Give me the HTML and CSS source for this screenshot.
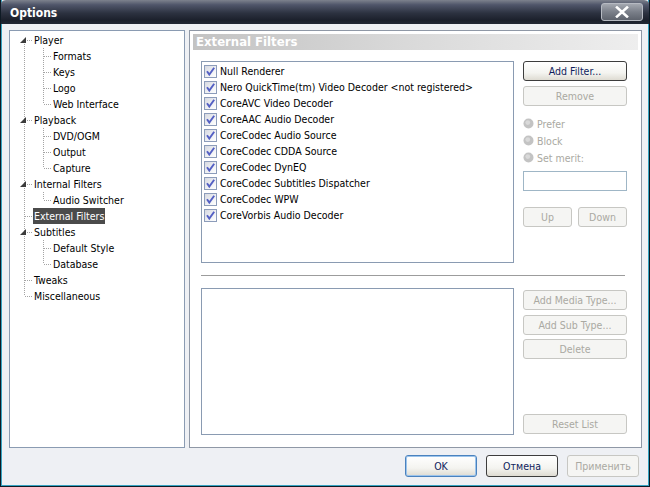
FILE: index.html
```html
<!DOCTYPE html>
<html>
<head>
<meta charset="utf-8">
<title>Options</title>
<link rel="stylesheet" href="styles.css">
</head>
<body>
<div class="window">
  <div class="titlebar">
    <span class="title">Options</span>
    <div class="close"><svg width="16" height="12" viewBox="0 0 16 12"><path d="M3 1.5L13 10.5M13 1.5L3 10.5" stroke="#fff" stroke-width="2.6" stroke-linecap="square"/></svg></div>
  </div>
  <div class="main">
    <div class="tree">
      <div class="trow"><svg class="g" width="23" height="16"><path class="dl" d="M14.5 8v8M17 8.5h6"/><path d="M16 5L16 11L10 11Z" fill="#3c3c3c"/></svg><span class="lbl">Player</span></div>
      <div class="trow"><svg class="g" width="42" height="16"><path class="dl" d="M14.5 0v16M33.5 0v16M34 8.5h8"/></svg><span class="lbl">Formats</span></div>
      <div class="trow"><svg class="g" width="42" height="16"><path class="dl" d="M14.5 0v16M33.5 0v16M34 8.5h8"/></svg><span class="lbl">Keys</span></div>
      <div class="trow"><svg class="g" width="42" height="16"><path class="dl" d="M14.5 0v16M33.5 0v16M34 8.5h8"/></svg><span class="lbl">Logo</span></div>
      <div class="trow"><svg class="g" width="42" height="16"><path class="dl" d="M14.5 0v16M33.5 0v8M34 8.5h8"/></svg><span class="lbl">Web Interface</span></div>
      <div class="trow"><svg class="g" width="23" height="16"><path class="dl" d="M14.5 0v16M17 8.5h6"/><path d="M16 5L16 11L10 11Z" fill="#3c3c3c"/></svg><span class="lbl">Playback</span></div>
      <div class="trow"><svg class="g" width="42" height="16"><path class="dl" d="M14.5 0v16M33.5 0v16M34 8.5h8"/></svg><span class="lbl">DVD/OGM</span></div>
      <div class="trow"><svg class="g" width="42" height="16"><path class="dl" d="M14.5 0v16M33.5 0v16M34 8.5h8"/></svg><span class="lbl">Output</span></div>
      <div class="trow"><svg class="g" width="42" height="16"><path class="dl" d="M14.5 0v16M33.5 0v8M34 8.5h8"/></svg><span class="lbl">Capture</span></div>
      <div class="trow"><svg class="g" width="23" height="16"><path class="dl" d="M14.5 0v16M17 8.5h6"/><path d="M16 5L16 11L10 11Z" fill="#3c3c3c"/></svg><span class="lbl">Internal Filters</span></div>
      <div class="trow"><svg class="g" width="42" height="16"><path class="dl" d="M14.5 0v16M33.5 0v8M34 8.5h8"/></svg><span class="lbl">Audio Switcher</span></div>
      <div class="trow"><svg class="g" width="23" height="16"><path class="dl" d="M14.5 0v16M15 8.5h8"/></svg><span class="lbl sel">External Filters</span></div>
      <div class="trow"><svg class="g" width="23" height="16"><path class="dl" d="M14.5 0v16M17 8.5h6"/><path d="M16 5L16 11L10 11Z" fill="#3c3c3c"/></svg><span class="lbl">Subtitles</span></div>
      <div class="trow"><svg class="g" width="42" height="16"><path class="dl" d="M14.5 0v16M33.5 0v16M34 8.5h8"/></svg><span class="lbl">Default Style</span></div>
      <div class="trow"><svg class="g" width="42" height="16"><path class="dl" d="M14.5 0v16M33.5 0v8M34 8.5h8"/></svg><span class="lbl">Database</span></div>
      <div class="trow"><svg class="g" width="23" height="16"><path class="dl" d="M14.5 0v16M15 8.5h8"/></svg><span class="lbl">Tweaks</span></div>
      <div class="trow"><svg class="g" width="23" height="16"><path class="dl" d="M14.5 0v8M15 8.5h8"/></svg><span class="lbl">Miscellaneous</span></div>
    </div>
    <div class="panel">
      <div class="panel-header">External Filters</div>
      <div class="panel-body">
        <div class="row1">
          <div class="listbox list1">
            <div class="item"><span class="cb"><svg width="11" height="11" viewBox="0 0 11 11"><path d="M2 5.2L4.3 8.6L9.2 1.8" stroke="#5460c4" stroke-width="1.9" fill="none"/></svg></span>Null Renderer</div>
            <div class="item"><span class="cb"><svg width="11" height="11" viewBox="0 0 11 11"><path d="M2 5.2L4.3 8.6L9.2 1.8" stroke="#5460c4" stroke-width="1.9" fill="none"/></svg></span>Nero QuickTime(tm) Video Decoder &lt;not registered&gt;</div>
            <div class="item"><span class="cb"><svg width="11" height="11" viewBox="0 0 11 11"><path d="M2 5.2L4.3 8.6L9.2 1.8" stroke="#5460c4" stroke-width="1.9" fill="none"/></svg></span>CoreAVC Video Decoder</div>
            <div class="item"><span class="cb"><svg width="11" height="11" viewBox="0 0 11 11"><path d="M2 5.2L4.3 8.6L9.2 1.8" stroke="#5460c4" stroke-width="1.9" fill="none"/></svg></span>CoreAAC Audio Decoder</div>
            <div class="item"><span class="cb"><svg width="11" height="11" viewBox="0 0 11 11"><path d="M2 5.2L4.3 8.6L9.2 1.8" stroke="#5460c4" stroke-width="1.9" fill="none"/></svg></span>CoreCodec Audio Source</div>
            <div class="item"><span class="cb"><svg width="11" height="11" viewBox="0 0 11 11"><path d="M2 5.2L4.3 8.6L9.2 1.8" stroke="#5460c4" stroke-width="1.9" fill="none"/></svg></span>CoreCodec CDDA Source</div>
            <div class="item"><span class="cb"><svg width="11" height="11" viewBox="0 0 11 11"><path d="M2 5.2L4.3 8.6L9.2 1.8" stroke="#5460c4" stroke-width="1.9" fill="none"/></svg></span>CoreCodec DynEQ</div>
            <div class="item"><span class="cb"><svg width="11" height="11" viewBox="0 0 11 11"><path d="M2 5.2L4.3 8.6L9.2 1.8" stroke="#5460c4" stroke-width="1.9" fill="none"/></svg></span>CoreCodec Subtitles Dispatcher</div>
            <div class="item"><span class="cb"><svg width="11" height="11" viewBox="0 0 11 11"><path d="M2 5.2L4.3 8.6L9.2 1.8" stroke="#5460c4" stroke-width="1.9" fill="none"/></svg></span>CoreCodec WPW</div>
            <div class="item"><span class="cb"><svg width="11" height="11" viewBox="0 0 11 11"><path d="M2 5.2L4.3 8.6L9.2 1.8" stroke="#5460c4" stroke-width="1.9" fill="none"/></svg></span>CoreVorbis Audio Decoder</div>
          </div>
          <div class="col1">
            <div class="btn">Add Filter...</div>
            <div class="btn dis gap5">Remove</div>
            <div class="radios">
              <div class="radio"><svg width="11" height="11" viewBox="0 0 11 11"><circle cx="5.5" cy="5.5" r="5" fill="#c3c3c3"/><circle cx="4.8" cy="4.6" r="2.4" fill="#d9d9d9"/></svg>Prefer</div>
              <div class="radio"><svg width="11" height="11" viewBox="0 0 11 11"><circle cx="5.5" cy="5.5" r="5" fill="#c3c3c3"/><circle cx="4.8" cy="4.6" r="2.4" fill="#d9d9d9"/></svg>Block</div>
              <div class="radio"><svg width="11" height="11" viewBox="0 0 11 11"><circle cx="5.5" cy="5.5" r="5" fill="#c3c3c3"/><circle cx="4.8" cy="4.6" r="2.4" fill="#d9d9d9"/></svg>Set merit:</div>
            </div>
            <div class="input"></div>
            <div class="updown">
              <div class="btn dis small">Up</div>
              <div class="btn dis small">Down</div>
            </div>
          </div>
        </div>
        <div class="sep"></div>
        <div class="row2">
          <div class="listbox list2"></div>
          <div class="col2">
            <div class="btn dis">Add Media Type...</div>
            <div class="btn dis gap5">Add Sub Type...</div>
            <div class="btn dis gap4">Delete</div>
            <div class="btn dis push">Reset List</div>
          </div>
        </div>
      </div>
    </div>
  </div>
  <div class="footer">
    <div class="btn fbtn def">OK</div>
    <div class="btn fbtn">Отмена</div>
    <div class="btn fbtn dis">Применить</div>
  </div>
</div>
</body>
</html>
```
FILE: styles.css
```css
html, body {
  margin: 0;
  padding: 0;
  background: #eef0f4;
}
body {
  font-family: "DejaVu Sans Condensed", "DejaVu Sans", sans-serif;
  font-size: 10.5px;
  color: #000;
}
.window {
  width: 650px;
  height: 487px;
  box-sizing: border-box;
  border: 1px solid #0e1a24;
  border-top: none;
  background: #eef0f4;
  box-shadow: inset 1px 0 0 #36a4c2, inset -1px 0 0 #36a4c2, inset 0 -1px 0 #36a4c2;
  overflow: hidden;
}
.titlebar {
  height: 24px;
  margin: 0 -1px;
  display: flex;
  align-items: center;
  justify-content: space-between;
  background: linear-gradient(#7d828d 0%, #50566a 20%, #2c3240 55%, #1b202b 85%, #222834 100%);
  border-radius: 6px 6px 0 0;
}
.title {
  color: #fff;
  font-weight: bold;
  font-size: 12px;
  padding-left: 10px;
  padding-top: 1px;
}
.close {
  width: 42px;
  height: 18px;
  box-sizing: border-box;
  margin-right: 7px;
  margin-top: 0px;
  border: 1px solid #b6bac2;
  border-radius: 3px;
  background: linear-gradient(#a4a8b0, #7a7f89 50%, #5e636d);
  display: flex;
  align-items: center;
  justify-content: center;
}
.main {
  display: flex;
  gap: 4px;
  padding: 6px 0 0 8px;
}
.tree {
  width: 176px;
  height: 418px;
  box-sizing: border-box;
  border: 1px solid #8a9bb2;
  background: #fff;
  padding-top: 1px;
}
.trow {
  height: 16px;
  display: flex;
  align-items: center;
  white-space: nowrap;
}
.g {
  flex: none;
  display: block;
}
.dl {
  stroke: #a4a4a4;
  stroke-width: 1;
  stroke-dasharray: 1 1;
  fill: none;
}
.lbl {
  padding: 1px 1px;
  line-height: 14px;
}
.lbl.sel {
  background: #4b4b4b;
  color: #fff;
}
.panel {
  width: 453px;
  height: 418px;
  box-sizing: border-box;
  border: 1px solid #8f98a6;
  background: #fff;
  padding: 3px;
}
.panel-header {
  height: 16px;
  background: linear-gradient(to right, #c3c3c3, #dadada 50%, #eeeeee);
  color: #fff;
  font-weight: bold;
  font-size: 13px;
  line-height: 16px;
  padding-left: 3px;
}
.panel-body {
  padding: 11px 0 0 8px;
}
.row1, .row2 {
  display: flex;
  gap: 9px;
}
.listbox {
  width: 313px;
  box-sizing: border-box;
  border: 1px solid #8a9bb2;
  background: #fff;
}
.list1 {
  height: 202px;
  padding: 1px 0 0 2px;
}
.list2 {
  height: 147px;
}
.item {
  height: 16px;
  display: flex;
  align-items: center;
  white-space: nowrap;
}
.cb {
  width: 13px;
  height: 13px;
  box-sizing: border-box;
  border: 1px solid #8c9cba;
  background: linear-gradient(135deg, #d6d9e1, #f4f5f7 70%, #fff);
  margin-right: 3px;
  display: flex;
  align-items: center;
  justify-content: center;
  flex: none;
}
.cb svg { display: block; }
.col1, .col2 {
  width: 104px;
  display: flex;
  flex-direction: column;
}
.btn {
  height: 20px;
  box-sizing: border-box;
  border: 1px solid #3d3d3d;
  border-radius: 3px;
  background: linear-gradient(#ffffff, #f4f4f0 60%, #dedbd2);
  color: #0f1d5c;
  display: flex;
  align-items: center;
  justify-content: center;
  white-space: nowrap;
}
.btn.dis {
  border-color: #c7c7c3;
  background: #f5f5f3;
  color: #aaa9a2;
}
.gap5 { margin-top: 5px; }
.gap4 { margin-top: 4px; }
.radios {
  margin-top: 9px;
  display: flex;
  flex-direction: column;
}
.radio {
  height: 17px;
  display: flex;
  align-items: center;
  color: #aaa9a2;
}
.radio svg {
  display: block;
  margin-right: 3px;
}
.input {
  margin-top: 5px;
  height: 20px;
  box-sizing: border-box;
  border: 1px solid #9fb6c6;
  background: #fff;
}
.updown {
  margin-top: 16px;
  display: flex;
  justify-content: space-between;
}
.btn.small { width: 49px; }
.sep {
  margin-top: 12px;
  width: 424px;
  height: 1px;
  background: #9c9c9c;
  margin-bottom: 12px;
}
.col2 {
  height: 147px;
  box-sizing: border-box;
  padding-top: 2px;
  padding-bottom: 1px;
}
.push { margin-top: auto; }
.footer {
  display: flex;
  justify-content: flex-end;
  gap: 9px;
  padding-right: 10px;
  margin-top: 7px;
}
.fbtn {
  width: 72px;
  height: 22px;
}
.fbtn.def {
  border-color: #4a82be;
  box-shadow: inset 0 0 0 1px #9cc4ec;
}
```
